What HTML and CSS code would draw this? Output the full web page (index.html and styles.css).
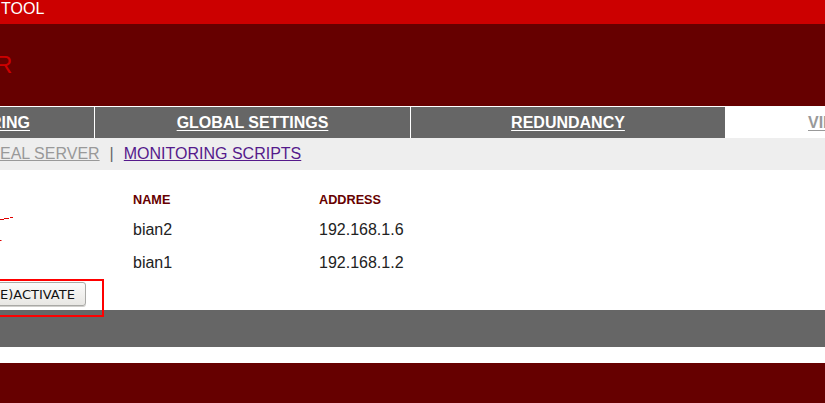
FILE: index.html
```html
<!DOCTYPE html>
<html>
<head>
<meta charset="utf-8">
<title>Piranha</title>
<link rel="stylesheet" href="styles.css">
</head>
<body>
<div class="page">
  <div class="topbar"><span class="toptitle">TOOL</span></div>
  <div class="banner"><span class="logo">R</span></div>
  <nav class="tabs">
    <a class="tab tab-first" href="#">RING</a>
    <a class="tab tab-wide" href="#">GLOBAL SETTINGS</a>
    <a class="tab tab-wide tab-third" href="#">REDUNDANCY</a>
    <a class="tab tab-wide tab-active" href="#">VIRTUAL SERVERS</a>
  </nav>
  <div class="subnav">
    <a class="sub-inactive" href="#">EAL SERVER</a>
    <span class="sep">|</span>
    <a class="sub-link" href="#">MONITORING SCRIPTS</a>
  </div>
  <main class="content">
    <svg class="marks" width="20" height="30" viewBox="0 0 20 30">
      <path d="M0 3.5H4M4 2.5H9M10 1.5H13" stroke="#e00000" stroke-width="1" fill="none"/>
      <path d="M0 24.5H1.5" stroke="#e00000" stroke-width="1" fill="none"/>
    </svg>
    <table class="servers">
      <thead>
        <tr><th class="c-name">NAME</th><th>ADDRESS</th></tr>
      </thead>
      <tbody>
        <tr><td class="c-name">bian2</td><td>192.168.1.6</td></tr>
        <tr><td class="c-name">bian1</td><td>192.168.1.2</td></tr>
      </tbody>
    </table>
    <div class="actions">
      <button class="btn" type="button">E)ACTIVATE</button>
    </div>
    <div class="highlight"></div>
  </main>
  <div class="graybar"></div>
  <div class="gap"></div>
  <footer class="footer"></footer>
</div>
</body>
</html>
```

FILE: styles.css
```css
html, body {
  margin: 0;
  padding: 0;
  background: #ffffff;
  overflow: hidden;
}
body {
  font-family: "Liberation Sans", Arial, sans-serif;
  width: 825px;
  height: 403px;
}
.page {
  width: 825px;
  overflow: hidden;
}
.topbar {
  height: 24px;
  background: #cc0000;
  display: flex;
  align-items: flex-start;
}
.toptitle {
  color: #ffffff;
  font-size: 16px;
  line-height: 18px;
  padding-left: 1px;
}
.banner {
  height: 82px;
  background: #660000;
  display: flex;
  align-items: flex-start;
}
.logo {
  color: #cc0000;
  font-size: 24px;
  font-weight: normal;
  line-height: 24px;
  margin-left: -5px;
  margin-top: 29px;
}
.tabs {
  display: flex;
  gap: 1px;
  background: #ffffff;
  padding-top: 1px;
  height: 31px;
  width: 1200px;
}
.tab {
  background: #666666;
  color: #ffffff;
  font-weight: bold;
  font-size: 16px;
  line-height: 31px;
  text-align: center;
  text-decoration: underline;
  text-underline-offset: 2px;
  flex: none;
  white-space: nowrap;
  overflow: hidden;
}
.tab-first {
  width: 94px;
  text-align: left;
  text-indent: -10px;
}
.tab-wide {
  width: 315px;
}
.tab-third {
  width: 314px;
}
.tab-active {
  background: #ffffff;
  color: #999999;
  width: 325px;
  text-align: left;
  padding-left: 82px;
  box-sizing: border-box;
}
.subnav {
  background: #eeeeee;
  height: 32px;
  display: flex;
  align-items: center;
  gap: 10px;
  font-size: 16px;
  color: #333333;
  padding-bottom: 1px;
  box-sizing: border-box;
}
.sub-inactive {
  color: #999999;
  text-decoration: underline;
}
.sep {
  color: #666666;
}
.sub-link {
  color: #551a8b;
  text-decoration: underline;
}
.content {
  position: relative;
  height: 140px;
}
.marks {
  position: absolute;
  left: 0;
  top: 46px;
}
.servers {
  border-collapse: collapse;
  margin-left: 133px;
  position: relative;
  top: 22px;
}
.servers th {
  color: #660000;
  font-size: 12.7px;
  font-weight: bold;
  text-align: left;
  padding: 0;
  height: 21px;
  vertical-align: top;
  line-height: 17px;
}
.servers td {
  color: #222222;
  font-size: 16px;
  padding: 0;
  height: 33px;
  line-height: 33px;
}
.servers .c-name {
  width: 186px;
}
.actions {
  position: relative;
  top: 25px;
}
.btn {
  margin-left: -10px;
  height: 24px;
  padding: 0 10px 0 9px;
  font-family: "DejaVu Sans", sans-serif;
  font-size: 13px;
  color: #111111;
  background: linear-gradient(#fbfbfa, #e8e7e4);
  border: 1px solid #a9a9a6;
  border-radius: 3px;
  box-shadow: 0 1px 0 #d0cfcc;
}
.highlight {
  position: absolute;
  left: -10px;
  top: 109px;
  width: 110px;
  height: 34px;
  border: 2px solid #ff0000;
  z-index: 2;
}
.graybar {
  height: 37px;
  background: #666666;
}
.gap {
  height: 16px;
  background: #ffffff;
}
.footer {
  height: 40px;
  background: #660000;
}
```
